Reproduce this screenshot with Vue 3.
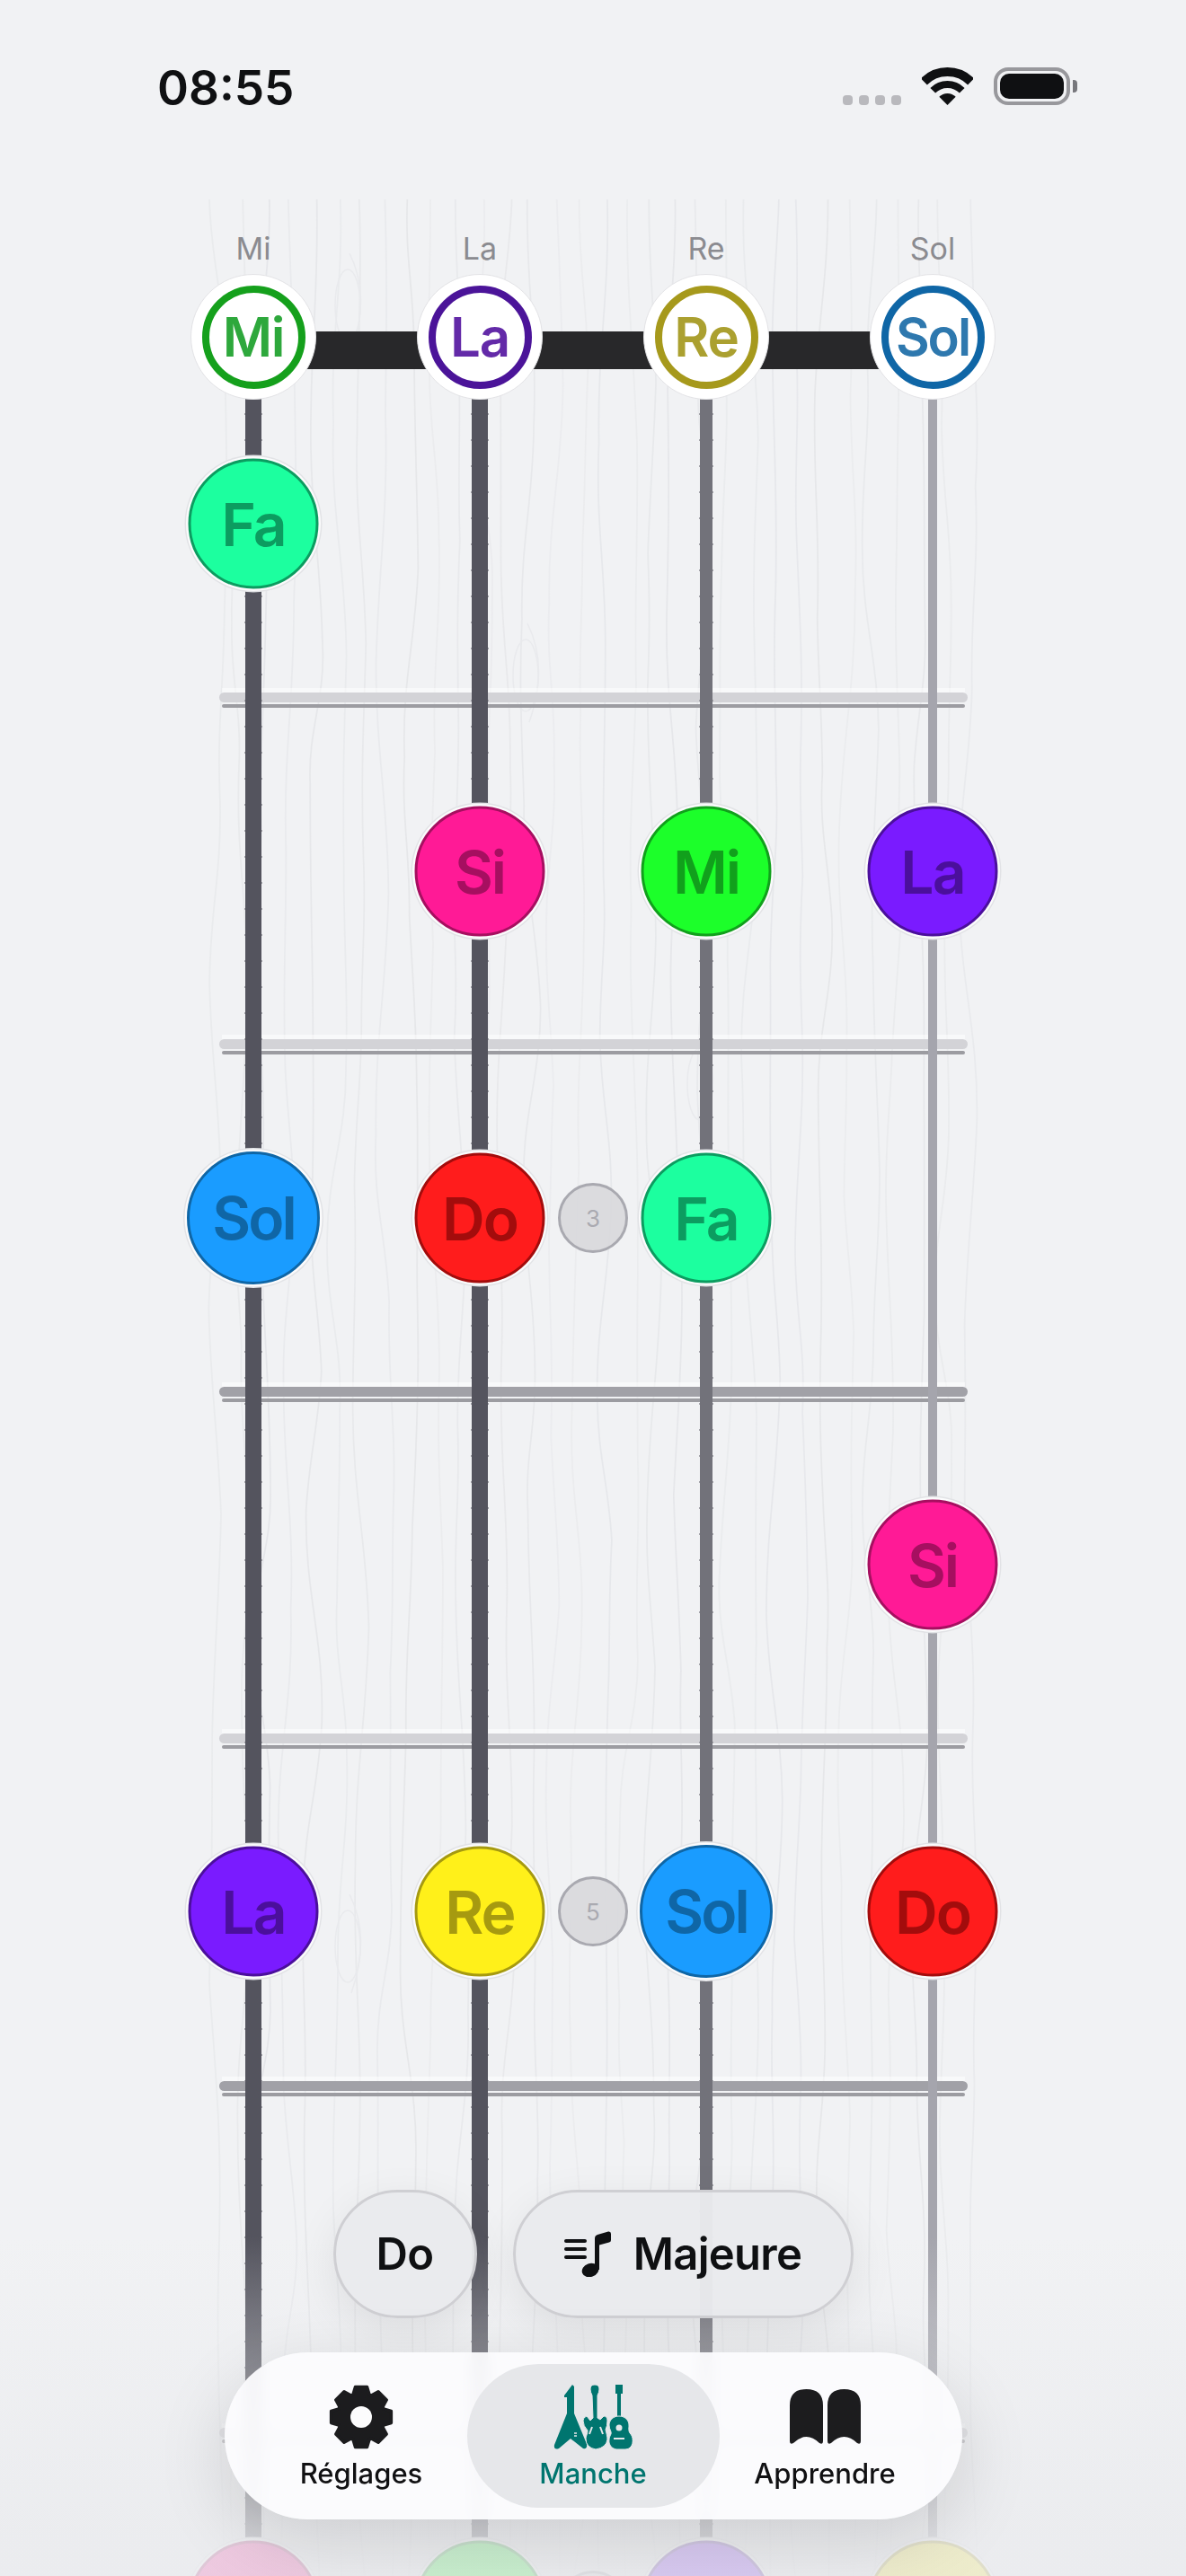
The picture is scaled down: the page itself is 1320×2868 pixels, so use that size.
<script setup>
const BOARD_TOP = 222
const cols = [282, 534, 786, 1038]
const C = {
  Do: ['#ff1c1c', '#a30c0c'],
  Re: ['#fff01a', '#a69a10'],
  Mi: ['#1cff2a', '#11a01c'],
  Fa: ['#1cff9f', '#0c9c60'],
  Sol: ['#1a9cff', '#0f66a6'],
  La: ['#7a1bff', '#4b0f9c'],
  Si: ['#ff1a96', '#a60f60']
}
const openStrings = [
  { name: 'Mi', ring: '#15a01c', text: '#2ea83c' },
  { name: 'La', ring: '#4b1499', text: '#632aa8' },
  { name: 'Re', ring: '#a6991c', text: '#aba030' },
  { name: 'Sol', ring: '#0f66a6', text: '#2e78ae' }
]
const stringClasses = ['thick', 'thick', 'mid', 'thin']
const frets = [
  { y: 771, dark: false }, { y: 1157, dark: false }, { y: 1544, dark: true },
  { y: 1930, dark: false }, { y: 2317, dark: true }, { y: 2703, dark: false }
]
// The last row runs past the bottom edge: only the top of its discs shows, no text.
const LAST_ROW = 2901
const notes = [
  [0, 583, 'Fa'],
  [1, 970, 'Si'], [2, 970, 'Mi'], [3, 970, 'La'],
  [0, 1356, 'Sol'], [1, 1356, 'Do'], [2, 1356, 'Fa'],
  [3, 1742, 'Si'],
  [0, 2128, 'La'], [1, 2128, 'Re'], [2, 2128, 'Sol'], [3, 2128, 'Do'],
  [0, LAST_ROW, 'Si'], [1, LAST_ROW, 'Mi'], [2, LAST_ROW, 'La'], [3, LAST_ROW, 'Re']
].map(([c, y, name]) => ({
  name,
  label: y === LAST_ROW ? '' : name,
  big: name === 'Sol',
  style: {
    left: cols[c] + 'px',
    top: y - BOARD_TOP + 'px',
    '--fill': C[name][0],
    '--dark': C[name][1]
  }
}))
const markers = [
  { n: '3', y: 1356 }, { n: '5', y: 2128 }, { n: '', y: LAST_ROW }
]

let seed = 41
const rnd = () => {
  seed = (seed * 16807) % 2147483647
  return seed / 2147483647
}
const grain = []
for (let x = 240; x < 1080; x += 27) {
  let cx = x + rnd() * 14 - 7
  let y = 0
  let d = `M${cx.toFixed(1)} 0`
  while (y < 2646) {
    const ny = y + 150 + rnd() * 130
    const nx = x + rnd() * 22 - 11
    d += ` C${(cx + rnd() * 8 - 4).toFixed(1)} ${(y + (ny - y) * 0.4).toFixed(0)} ${(nx + rnd() * 8 - 4).toFixed(1)} ${(y + (ny - y) * 0.6).toFixed(0)} ${nx.toFixed(1)} ${ny.toFixed(0)}`
    cx = nx
    y = ny
  }
  grain.push({ d, o: (0.45 + rnd() * 0.5).toFixed(2) })
}
const knots = [[387, 118], [585, 530], [779, 985], [387, 1945]]

let gear = ''
for (let i = 0; i < 8; i++) {
  const a = i * 45
  const p = (deg, r) => {
    const t = ((deg - 90) * Math.PI) / 180
    return `${(36 + r * Math.cos(t)).toFixed(2)} ${(36 + r * Math.sin(t)).toFixed(2)}`
  }
  gear += `${i ? 'L' : 'M'}${p(a - 11, 34)} L${p(a + 11, 34)} L${p(a + 20, 26.5)} L${p(a + 25, 26.5)} `
}
gear += 'Z'
</script>

<template>
  <div class="phone">
    <header class="status">
      <span class="time">08:55</span>
      <div class="status-icons">
        <div class="signal"><i></i><i></i><i></i><i></i></div>
        <svg class="wifi" width="57" height="42" viewBox="0 0 57 42">
          <path d="M2.34 15.84A37 37 0 0 1 54.66 15.84" fill="none" stroke="#0f1012" stroke-width="10" />
          <path d="M12.24 25.74A23 23 0 0 1 44.76 25.74" fill="none" stroke="#0f1012" stroke-width="8" />
          <path d="M28.5 42L19.3 32.8A13 13 0 0 1 37.7 32.8Z" fill="#0f1012" />
        </svg>
        <div class="battery"><div class="battery-level"></div></div>
        <div class="battery-cap"></div>
      </div>
    </header>

    <main class="board">
      <svg class="grain" width="1320" height="2646" viewBox="0 0 1320 2646">
        <path v-for="(g, i) in grain" :key="i" :d="g.d" :opacity="g.o" fill="none" stroke="#e4e5e8" stroke-width="1.7" />
        <g v-for="(k, i) in knots" :key="'k' + i" fill="none" stroke="#e9eaed" stroke-width="1.5">
          <ellipse :cx="k[0]" :cy="k[1]" rx="14" ry="40" />
          <path :d="`M${k[0] + 2} ${k[1] - 58}Q${k[0] + 26} ${k[1] - 10} ${k[0] + 4} ${k[1] + 52}`" />
        </g>
      </svg>

      <div
        v-for="f in frets"
        :key="f.y"
        class="fret"
        :class="{ dark: f.dark }"
        :style="{ top: f.y - BOARD_TOP + 'px' }"
      ></div>

      <div class="nut"></div>

      <div
        v-for="(c, i) in cols"
        :key="c"
        class="string"
        :class="stringClasses[i]"
        :style="{ left: c + 'px' }"
      ></div>

      <template v-for="(o, i) in openStrings" :key="o.name">
        <span class="string-label" :style="{ left: cols[i] + 'px' }">{{ o.name }}</span>
        <div class="open-note" :style="{ left: cols[i] + 'px', '--ring': o.ring, '--text': o.text }">
          <span class="open-ring" :class="{ long: o.name === 'Sol' }">{{ o.name }}</span>
        </div>
      </template>

      <div
        v-for="m in markers"
        :key="m.y"
        class="marker"
        :style="{ top: m.y - BOARD_TOP + 'px' }"
      >{{ m.n }}</div>

      <div v-for="n in notes" :key="n.style.left + n.style.top" class="note" :class="{ big: n.big }" :style="n.style">
        {{ n.label }}
      </div>
    </main>

    <div class="fog"></div>

    <div class="controls">
      <div class="pickers">
        <button class="pill pill-root">Do</button>
        <button class="pill pill-scale">
          <svg width="52" height="51" viewBox="0 0 52 51" fill="#0f1012">
            <rect x="0" y="9" width="25" height="4" rx="2" />
            <rect x="0" y="18" width="25" height="4" rx="2" />
            <rect x="0" y="27" width="25" height="4" rx="2" />
            <ellipse cx="29" cy="43.5" rx="9.5" ry="7.5" transform="rotate(-20 29 43.5)" />
            <path d="M34 43V8Q34 5 37 4L49 .5Q52 0 52 3V10Q52 12 50 12.5L39 15.5V43Z" />
          </svg>
          <span>Majeure</span>
        </button>
      </div>

      <nav class="tabbar">
        <div class="tab">
          <div class="tab-icon">
            <svg width="72" height="72" viewBox="0 0 72 72">
              <path :d="gear" fill="#1c1c1e" stroke="#1c1c1e" stroke-width="3.5" stroke-linejoin="round" />
              <circle cx="36" cy="36" r="12" fill="#fcfcfd" />
            </svg>
          </div>
          <span>Réglages</span>
        </div>
        <div class="tab active">
          <div class="tab-icon">
            <svg width="88" height="72" viewBox="0 0 88 72" fill="#00756f">
              <path d="M12 12L21 0L23 2V32L37 66Q38 72 33 71L19 60L6 71Q0 73 1 67L15 32V14L12 14Z" />
              <path d="M43 12Q41 8 41 5Q41 0 46 0Q51 0 51 5Q51 8 49 12V37L52 39L56 35Q60 35 60 40Q60 46 58 50C59 54 60 58 60 61Q59 70 47 72Q36 70 36 60C36 57 38 55 38 51Q33 46 33 40Q33 36 37 35L41 40L44 37Z" stroke="#e6e7ea" stroke-width="1" />
              <path d="M40 55L43 47M55 55L52 47" stroke="#e6e7ea" stroke-width="2" fill="none" />
              <rect x="69" y="0" width="8" height="10" />
              <rect x="71" y="8" width="4" height="30" />
              <path d="M73 35C66 35 62 40 62 45C62 50 65 52 64 55C61 60 60 70 70 72H80C89 72 90 60 86 55C83 52 84 49 84 45C84 40 80 35 73 35Z" stroke="#e6e7ea" stroke-width="1" />
              <circle cx="73" cy="48" r="3.5" fill="#e6e7ea" />
              <rect x="67" y="59" width="12" height="2" fill="#e6e7ea" />
              <path d="M23 54h3M23 57h3" stroke="#e6e7ea" stroke-width="1.5" />
            </svg>
          </div>
          <span>Manche</span>
        </div>
        <div class="tab">
          <div class="tab-icon">
            <svg width="79" height="62" viewBox="0 0 79 62" fill="#1c1c1e">
              <path d="M0 18Q0 0 18.500 0Q37 0 37 18V58Q37 62 33 60Q18.500 46 4 60Q0 62 0 58Z" />
              <path d="M42 18Q42 0 60.500 0Q79 0 79 18V58Q79 62 75 60Q60.500 46 46 60Q42 62 42 58Z" />
            </svg>
          </div>
          <span>Apprendre</span>
        </div>
      </nav>
    </div>
  </div>
</template>

<style>
html, body { margin: 0; height: 2868px; overflow: hidden; background: #f1f2f4; }
</style>

<style scoped>
.phone {
  position: relative;
  width: 1320px;
  height: 2868px;
  overflow: hidden;
  background: #f1f2f4;
  font-family: Inter, "Liberation Sans", sans-serif;
  display: flex;
  flex-direction: column;
}

.status {
  height: 222px;
  flex: none;
  box-sizing: border-box;
  padding: 71px 121px 0 175px;
  display: flex;
  justify-content: space-between;
  align-items: flex-start;
}
.time {
  font-size: 53px;
  line-height: 54px;
  font-weight: 600;
  color: #0f1012;
}
.status-icons {
  display: flex;
  align-items: flex-end;
  margin-top: 4px;
  height: 42px;
}
.signal { display: flex; gap: 7px; margin-right: 23px; }
.signal i {
  width: 11px;
  height: 11px;
  border-radius: 4px;
  background: #b9b9bd;
}
.wifi { margin-right: 23px; }
.battery {
  width: 85px;
  height: 42px;
  box-sizing: border-box;
  border: 4px solid #98989c;
  border-radius: 16px;
  padding: 3px;
}
.battery-level { height: 100%; background: #0f1012; border-radius: 10px; }
.battery-cap {
  width: 5px;
  height: 14px;
  margin: 0 0 14px 3px;
  background: #77777c;
  border-radius: 0 4px 4px 0;
}

.board { position: relative; flex: 1; }
.grain { position: absolute; left: 0; top: 0; }

.fret {
  position: absolute;
  left: 244px;
  width: 833px;
  height: 11px;
  border-radius: 6px;
  background: #d3d3d7;
}
.fret.dark { background: #a1a1a7; }
.fret::before {
  content: "";
  position: absolute;
  left: 3px;
  right: 3px;
  top: -5px;
  height: 5px;
  background: rgba(255, 255, 255, 0.5);
}
.fret::after {
  content: "";
  position: absolute;
  left: 3px;
  right: 3px;
  top: 13px;
  height: 4px;
  border-radius: 2px;
  background: #9c9ca1;
}

.nut {
  position: absolute;
  left: 282px;
  width: 756px;
  top: 147px;
  height: 42px;
  background: #28282a;
}

.string {
  position: absolute;
  top: 153px;
  bottom: 0;
  transform: translateX(-50%);
}
.string::before {
  content: "";
  position: absolute;
  left: -1px;
  right: -1px;
  top: 0;
  bottom: 0;
  background: repeating-linear-gradient(180deg, transparent 0 27px, #a6a6ac 27px 29px);
}
.string::after {
  content: "";
  position: absolute;
  inset: 0;
  background: inherit;
}
.string.thick { width: 18px; background: #54545e; }
.string.mid { width: 14px; background: #72727a; }
.string.thin { width: 10px; background: #a5a5ad; }
.string.thin::before { display: none; }

.string-label {
  position: absolute;
  top: 35px;
  transform: translateX(-50%);
  font-size: 34px;
  line-height: 40px;
  color: #8b8b90;
}

.open-note {
  position: absolute;
  top: 153px;
  width: 140px;
  height: 140px;
  box-sizing: border-box;
  transform: translate(-50%, -50%);
  border-radius: 50%;
  background: #fff;
  border: 1.5px solid #e3e3e6;
  display: flex;
  align-items: center;
  justify-content: center;
}
.open-ring {
  width: 115px;
  height: 115px;
  box-sizing: border-box;
  border-radius: 50%;
  border: 8px solid var(--ring);
  color: var(--text);
  font-size: 60px;
  font-weight: 600;
  letter-spacing: -0.02em;
  display: flex;
  align-items: center;
  justify-content: center;
}
.open-ring.long { font-size: 58px; letter-spacing: -0.035em; }

.note {
  position: absolute;
  width: 145px;
  height: 145px;
  box-sizing: border-box;
  transform: translate(-50%, -50%);
  border-radius: 50%;
  background: var(--fill);
  border: 3.500px solid var(--dark);
  box-shadow: 0 0 0 2.500px #fbfbfc, 0 0 0 4px #e2e3e6;
  color: var(--dark);
  font-size: 66px;
  font-weight: 600;
  letter-spacing: -0.03em;
  display: flex;
  align-items: center;
  justify-content: center;
}
.note.big { width: 148px; height: 148px; letter-spacing: -0.045em; }

.marker {
  position: absolute;
  left: 660px;
  width: 78px;
  height: 78px;
  box-sizing: border-box;
  transform: translate(-50%, -50%);
  border-radius: 50%;
  border: 3.500px solid #a9a9b0;
  background: rgba(216, 216, 220, 0.9);
  color: #aaaab1;
  font-size: 26px;
  display: flex;
  align-items: center;
  justify-content: center;
}

.fog {
  position: absolute;
  left: 0;
  right: 0;
  top: 2490px;
  bottom: 0;
  background: linear-gradient(180deg, rgba(238, 239, 242, 0), rgba(234, 235, 238, 0.84) 90%);
}

.controls {
  position: absolute;
  left: 0;
  right: 0;
  top: 2438px;
  display: flex;
  flex-direction: column;
  align-items: center;
  gap: 38px;
}
.pickers { display: flex; gap: 40px; }
.pill {
  height: 143px;
  box-sizing: border-box;
  border-radius: 72px;
  border: 3px solid #cfcfd3;
  background: rgba(233, 234, 237, 0.97);
  box-shadow: 0 14px 50px rgba(0, 0, 0, 0.08);
  color: #0f1012;
  font-family: inherit;
  font-size: 49px;
  font-weight: 600;
  letter-spacing: -0.015em;
  padding: 0;
  display: flex;
  align-items: center;
  justify-content: center;
}
.pill-root { width: 160px; }
.pill-scale { width: 379px; gap: 25px; }

.tabbar {
  width: 821px;
  height: 186px;
  box-sizing: border-box;
  padding: 13px 35px;
  border-radius: 93px;
  background: rgba(252, 252, 254, 0.93);
  backdrop-filter: blur(8px);
  box-shadow: 0 24px 80px rgba(0, 0, 0, 0.13);
  display: grid;
  grid-template-columns: 1fr 281px 1fr;
}
.tab {
  display: flex;
  flex-direction: column;
  align-items: center;
  padding-top: 23px;
  border-radius: 80px;
  font-size: 31px;
  line-height: 36px;
  font-weight: 500;
  color: #111113;
}
.tab-icon {
  height: 72px;
  display: flex;
  align-items: center;
  margin-bottom: 9px;
}
.tab.active { background: #e6e7ea; color: #00756f; }
</style>
